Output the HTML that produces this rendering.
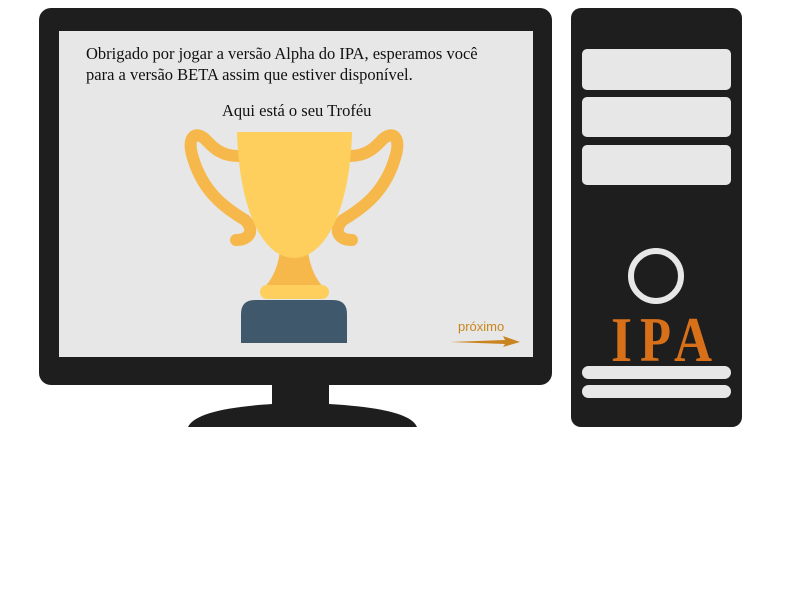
<!DOCTYPE html>
<html><head><meta charset="utf-8"><style>
body{margin:0;width:800px;height:600px;background:#fff;position:relative;overflow:hidden;font-family:"Liberation Serif",serif}
.a{position:absolute}
</style></head><body>
<div class="a" style="left:39px;top:8px;width:513px;height:377px;background:#1e1e1e;border-radius:12px"></div>
<div class="a" style="left:59px;top:31px;width:474px;height:326px;background:#e7e7e7"></div>
<div class="a" style="left:86px;top:43px;font-size:16.5px;line-height:21px;color:#111">Obrigado por jogar a versão Alpha do IPA, esperamos você<br>para a versão BETA assim que estiver disponível.</div>
<div class="a" style="left:222px;top:101px;font-size:16.5px;color:#111">Aqui está o seu Troféu</div>
<svg class="a" style="left:0;top:0" width="800" height="600">
<g fill="none" stroke="#f6b84b" stroke-width="12" stroke-linecap="round">
<path d="M238 156 C220 156 212 146 206 140 C196 130 186 136 193 158 C203 192 225 208 245 220 C255 230 250 240 236 240"/>
<path d="M350 156 C368 156 376 146 382 140 C392 130 402 136 395 158 C385 192 363 208 343 220 C333 230 338 240 352 240"/>
</g>
<path d="M280 250 L308 250 C310 270 318 282 326 290 L262 290 C270 282 278 270 280 250Z" fill="#f6b84b"/>
<path d="M237 132 L352 132 C350 210 325 258 294 258 C263 258 239 210 237 132Z" fill="#fecf5c"/>
<rect x="260" y="285" width="69" height="14" rx="7" fill="#fecf5c"/>
<path d="M241 343 L241 314 Q241 300 255 300 L333 300 Q347 300 347 314 L347 343Z" fill="#3f586b"/>
<text x="458" y="331" font-family="Liberation Sans,sans-serif" font-size="13" fill="#c8861c">próximo</text>
<path d="M450 342 L505 340 L503 336 L520 342 L503 347 L505 344 Z" fill="#c98420"/>
<path d="M272 385 L329 385 L329 404 C380 407 412 414 417 427 L188 427 C194 414 225 407 272 404Z" fill="#1e1e1e"/>
<rect x="571" y="8" width="171" height="419" rx="10" fill="#1e1e1e"/>
<rect x="582" y="49" width="149" height="41" rx="5" fill="#e7e7e7"/>
<rect x="582" y="97" width="149" height="40" rx="5" fill="#e7e7e7"/>
<rect x="582" y="145" width="149" height="40" rx="5" fill="#e7e7e7"/>
<circle cx="656" cy="276" r="25" fill="none" stroke="#e7e7e7" stroke-width="6"/>
<g font-family="Liberation Serif,serif" font-weight="bold" font-size="64" fill="#d8701a">
<text x="611" y="361" textLength="21" lengthAdjust="spacingAndGlyphs">I</text>
<text x="640" y="361" textLength="31" lengthAdjust="spacingAndGlyphs">P</text>
<text x="674" y="361" textLength="38" lengthAdjust="spacingAndGlyphs">A</text>
</g>
<rect x="582" y="366" width="149" height="13" rx="6.5" fill="#e7e7e7"/>
<rect x="582" y="385" width="149" height="13" rx="6.5" fill="#e7e7e7"/>
</svg>
</body></html>
